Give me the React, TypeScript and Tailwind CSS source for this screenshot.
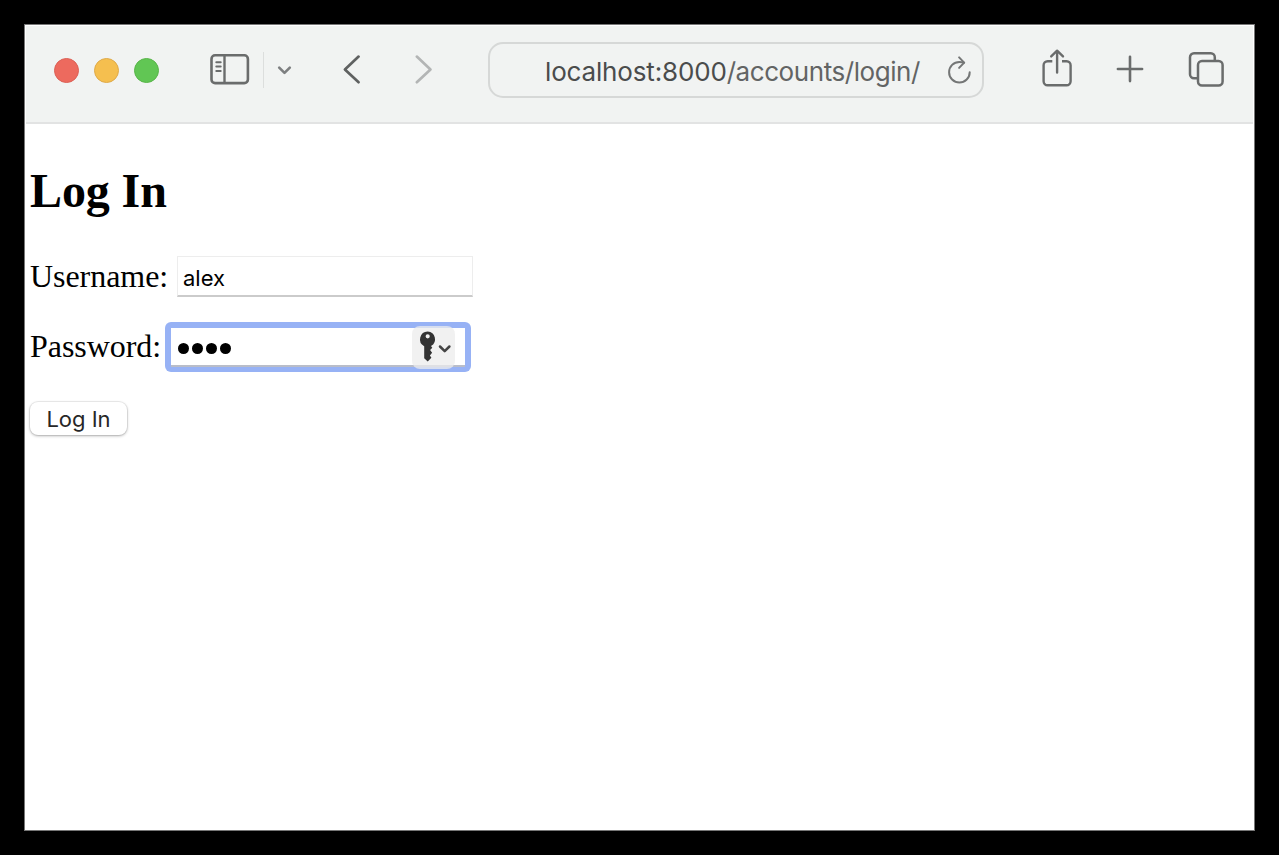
import React from "react";

const INK = "#6a6c6c";

function SidebarIcon() {
  return (
    <svg className="ml-[50px] mt-[26px] shrink-0" width="42" height="34" viewBox="0 0 42 34" fill="none" stroke={INK} strokeLinecap="round">
      <rect x="2.5" y="3.3" width="36.4" height="27.800" rx="3.6" strokeWidth="2.6" />
      <path d="M15.5 3.5V31" strokeWidth="2.4" strokeLinecap="butt" />
      <path d="M7.3 10.2h4.4M7.3 14.6h4.4M7.3 19h4.4" strokeWidth="2" />
    </svg>
  );
}

function ShareIcon() {
  return (
    <svg className="ml-14 mt-[22px] shrink-0" width="34" height="40" viewBox="0 0 34 40" fill="none" stroke={INK} strokeWidth="2.4" strokeLinecap="round" strokeLinejoin="round">
      <path d="M12.3 13.2H7.6a4 4 0 0 0-4 4V33.300a4 4 0 0 0 4 4H26.600a4 4 0 0 0 4-4V17.200a4 4 0 0 0-4-4H22" strokeLinecap="butt" />
      <path d="M17.100 24.500V2.800M11.200 8.400l5.900-5.700 5.900 5.700" />
    </svg>
  );
}

function TabsIcon() {
  return (
    <svg className="ml-[42px] mt-6 shrink-0" width="38" height="38" viewBox="0 0 38 38" fill="none" stroke={INK} strokeWidth="2.5">
      <path d="M10 28.200H7a4 4 0 0 1-4-4V7.200a4 4 0 0 1 4-4H23.800a4 4 0 0 1 4 4v3" />
      <rect x="11" y="11" width="24.600" height="24.600" rx="4" />
    </svg>
  );
}

function Toolbar() {
  return (
    <header className="flex h-[98px] items-start border-b-2 border-[#e2e3e3] bg-[#f1f3f2]">
      <div className="ml-7 mt-8 flex shrink-0 gap-[15px]">
        <span className="size-[25px] rounded-full border border-[#dc6056] bg-[#ed6a5e]" />
        <span className="size-[25px] rounded-full border border-[#dfaa49] bg-[#f5bf4f]" />
        <span className="size-[25px] rounded-full border border-[#58b549] bg-[#61c654]" />
      </div>
      <SidebarIcon />
      <span className="ml-3 mt-[26px] h-9 w-px shrink-0 bg-[#dcdedd]" />
      <svg className="ml-[13px] mt-[38px] shrink-0" width="16" height="12" viewBox="0 0 16 12" fill="none" stroke="#7d7f80" strokeWidth="2.6" strokeLinecap="round" strokeLinejoin="round">
        <path d="M2.200 3.600 7.500 8.900 12.800 3.600" />
      </svg>
      <svg className="ml-[49px] mt-7 shrink-0" width="20" height="32" viewBox="0 0 20 32" fill="none" stroke="#5f6161" strokeWidth="2.7" strokeLinecap="round" strokeLinejoin="round">
        <path d="M16.600 2.600 2.900 15.400 16.600 28.200" />
      </svg>
      <svg className="ml-[52px] mt-7 shrink-0" width="20" height="32" viewBox="0 0 20 32" fill="none" stroke="#b3b5b5" strokeWidth="2.7" strokeLinecap="round" strokeLinejoin="round">
        <path d="M2.800 2.600 16.500 15.400 2.800 28.200" />
      </svg>
      <div className="ml-[54px] mt-4 flex h-[56px] w-[496px] shrink-0 items-center rounded-[15px] border-2 border-[#d6d8d7] pl-[55px]">
        <span className="w-[376px] whitespace-nowrap pt-[3px] font-['Inter',sans-serif] text-[26px] leading-[30px] text-[#626464]">
          <span className="tracking-[-0.16px] text-[#4a4c4c]">localhost:8000</span>
          <span className="tracking-[-0.43px]">/accounts/login/</span>
        </span>
        <svg className="ml-[26px] shrink-0" width="28" height="34" viewBox="0 0 28 34" fill="none" stroke="#747676" strokeWidth="2" strokeLinecap="round" strokeLinejoin="round">
          <path d="M22.700 19.200A10.300 10.300 0 1 1 12.400 8.900c1.800 0 3.100.200 4.600.700" />
          <path d="M12.100 4.400 17.200 9.600 12.100 14.900" />
        </svg>
      </div>
      <ShareIcon />
      <svg className="ml-[41px] mt-7 shrink-0" width="30" height="30" viewBox="0 0 30 30" fill="none" stroke={INK} strokeWidth="2.600" strokeLinecap="round">
        <path d="M15 2.700V27.100M2.900 15H27.100" />
      </svg>
      <TabsIcon />
    </header>
  );
}

export default function App() {
  return (
    <div className="h-[855px] w-[1279px] overflow-hidden bg-black p-6">
      <div className="h-[807px] w-[1231px] border border-[#777] bg-white p-px">
        <Toolbar />
        <main className="pl-1 font-['Liberation_Serif',serif] text-[32px] leading-9 text-black">
          <h1 className="mt-10 text-[48px] font-bold leading-[54px] tracking-[-0.1px]">Log In</h1>
          <div className="mt-[37px] flex h-[42px] items-center">
            <label className="w-[147px] whitespace-nowrap tracking-[-0.05px]">Username:</label>
            <div className="flex h-[41px] w-[296px] items-center border border-b-2 border-[#ededed] border-b-[#cbcbcb] pl-[5px] pt-[5px] font-['Inter',sans-serif] text-[22px]">alex</div>
          </div>
          <div className="mt-[25px] flex h-[50px] items-center">
            <label className="w-[135px] whitespace-nowrap pb-[2px] tracking-[-0.05px]">Password:</label>
            <div className="flex h-[50px] w-[306px] items-center rounded-[6px] bg-[#97b2f5] px-[6px]">
              <div className="flex h-[39px] w-[294px] items-center border-b-2 border-[#b9bdc9] bg-white pl-[7px] pt-[2px]">
                <div className="flex gap-[3px] pt-[3px]">
                  <span className="size-[11px] rounded-full bg-black" />
                  <span className="size-[11px] rounded-full bg-black" />
                  <span className="size-[11px] rounded-full bg-black" />
                  <span className="size-[11px] rounded-full bg-black" />
                </div>
                <div className="ml-[181px] h-[43px] w-[43px] shrink-0 rounded-[8px] bg-[#ececec]/75">
                  <svg width="43" height="43" viewBox="0 0 43 43">
                    <path fill="#333" fillRule="evenodd" d="M15.700 5.500a7.800 7.800 0 0 0-3.500 14.700V32.200l3.500 3.200 3.700-3.700-1.500-2.300 2.200-2.700-2-2.600 2.200-2.300-1.300-1.700A7.800 7.800 0 0 0 15.700 5.500Zm0 2.700a2.100 2.100 0 1 1 0 4.200 2.100 2.100 0 0 1 0-4.200Z" />
                    <path d="M28 20.500 32.700 25.200 37.400 20.500" fill="none" stroke="#444" strokeWidth="2.500" strokeLinecap="round" strokeLinejoin="round" />
                  </svg>
                </div>
              </div>
            </div>
          </div>
          <button className="mt-[30px] flex h-[33px] w-[97px] items-center justify-center rounded-[8px] bg-white font-['Inter',sans-serif] text-[22px] text-[#272727] shadow-[0_0_0_1px_rgba(0,0,0,0.06),0_1px_3px_rgba(0,0,0,0.3)]">Log In</button>
        </main>
      </div>
    </div>
  );
}
